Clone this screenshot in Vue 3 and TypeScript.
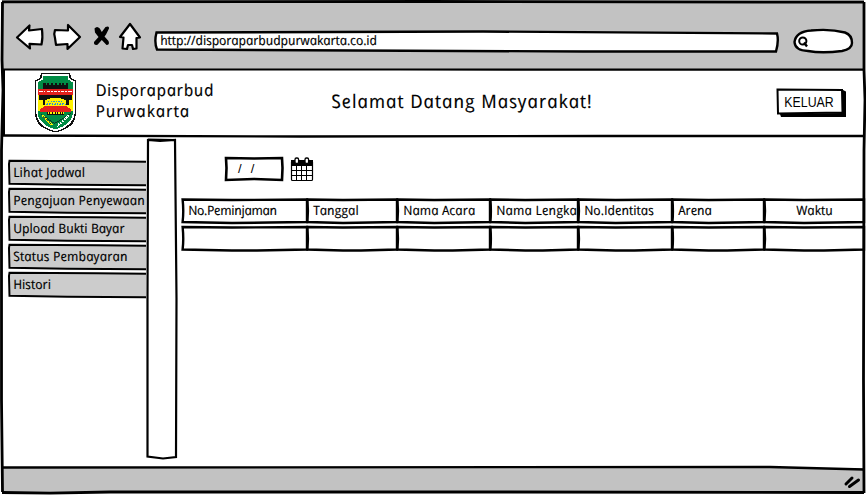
<script setup lang="ts">
interface MenuItem {
  label: string
  tone: string
}

interface Column {
  label: string
  width: number
  tone: string
}

const menu: MenuItem[] = [
  { label: 'Lihat Jadwal', tone: 'm1' },
  { label: 'Pengajuan Penyewaan', tone: 'm2' },
  { label: 'Upload Bukti Bayar', tone: 'm3' },
  { label: 'Status Pembayaran', tone: 'm4' },
  { label: 'Histori', tone: 'm5' },
]

const columns: Column[] = [
  { label: 'No.Peminjaman', width: 125, tone: 'c1' },
  { label: 'Tanggal', width: 90, tone: 'c2' },
  { label: 'Nama Acara', width: 93, tone: 'c3' },
  { label: 'Nama Lengka', width: 88, tone: 'c4' },
  { label: 'No.Identitas', width: 94, tone: 'c5' },
  { label: 'Arena', width: 92, tone: 'c6' },
  { label: 'Waktu', width: 100, tone: 'c7' },
]
</script>

<template>
  <div class="window">
    <header class="chrome">
      <nav class="tools">
        <svg class="nav-icons" width="136" height="40" viewBox="10 16 136 40">
          <g fill="#fff" stroke="#000" stroke-width="2.2" stroke-linejoin="round">
            <path d="M17 37.500 L29.500 25.500 L29 30.500 L42 29 Q43 38 41.500 44.500 L29.500 43.800 L30 48.500 Z" />
            <path d="M80 37 L68 25 L68 30.500 L55 30 Q53.500 34 55 38 L56 44.800 L67.500 44 L67.500 49 Z" />
            <path d="M130 24 L120 37 L123.500 37.500 L122.500 48.500 L127 49 L128 45 L132 45 L133 49 L136.500 48.500 L136.500 38 L140 37.500 Z" />
          </g>
          <path d="M94.500 28.500 Q97 25.500 99.800 28.500 L101.800 32 L105.500 27 Q109.500 25.500 109 28.500 L106 34.500 L104.500 36.500 L108.500 41 Q110 45 106.500 45 L101.800 40 L97.500 44.800 Q93.500 45.500 94 42 L98.500 37 L95 32.500 Z" />
        </svg>
      </nav>
      <div class="address">
        <svg class="sketch" viewBox="0 0 626 24">
          <path d="M3.500 2.500 L330 1.500 L624 3.500 Q626 11 623 21.500 H430 L200 20.500 L4 19.500 Q1 12 3.500 2.500 Z" />
        </svg>
        <span class="hand url">http://disporaparbudpurwakarta.co.id</span>
      </div>
      <div class="search">
        <svg width="62" height="28" viewBox="792 27 62 28" fill="#fff" stroke="#000" stroke-width="2.400">
          <path d="M794.500 42 Q796 31.500 811 30.500 Q830 28.500 845 32.500 Q852 35 852 43 Q852 49 842 51 Q822 53.500 808 51 Q795 50.500 794.500 42 Z" />
          <circle cx="802.800" cy="41" r="3.600" stroke-width="2" />
          <path d="M804 42.500 L807 46.500" stroke-width="2.400" />
        </svg>
      </div>
    </header>

    <section class="banner">
      <svg class="crest" width="41" height="60" viewBox="105 219 124 180" shape-rendering="crispEdges">
        <path fill="#111" d="M123 219 H211 L214 233 L229 241 V340 Q227 366 211 379 Q190 394 167 398 Q143 394 123 379 Q107 366 105 340 V241 L120 233 Z" />
        <path fill="#fff" d="M127 222 H207 L210 236 L225 243 V340 Q222 362 207 374 Q190 390 167 394 Q143 390 126 374 Q111 362 109 340 V243 L124 236 Z" />
        <path fill="#008c45" d="M130 228 H204 L206 239 L220 247 V340 Q217 358 203 370 Q187 384 167 388 Q146 384 130 370 Q115 358 113 340 V247 L128 239 Z" />
        <path fill="#fff200" d="M113 284 H220 V334 H113 Z" />
        <path fill="#101010" d="M130 247 H137 V254 H142 V247 H148 V254 H153 V247 H160 V254 H165 V247 H172 V254 H177 V247 H183 V254 H188 V247 H194 V254 H199 V247 H205 V270 H130 Z" />
        <path fill="#101010" d="M118 285 H216 V300 H208 V315 H198 V300 H136 V315 H128 V300 H118 Z" />
        <path fill="#fff200" d="M142 297 H151 V293 H184 V297 H193 V303 H199 V318 H136 V303 H142 Z" />
        <path stroke="#2b8fd8" stroke-width="3" stroke-dasharray="4 4" d="M144 303 H192 M140 309 H196 M139 315 H198" />
        <path fill="#e3211c" d="M114 268 H219 V284 H114 Z M137 317 H199 L213 328 V336 H119 V329 Z" />
        <path stroke="#fff" stroke-width="3" stroke-dasharray="10 3 5 4" d="M118 275 H216" />
        <path fill="#101010" d="M142 336 H194 V344 H142 Z" />
        <path stroke="#fff200" stroke-width="6" stroke-dasharray="5 3" d="M143 339 H194" />
        <path stroke="#101010" stroke-width="2" d="M122 342 L164 371 M213 341 L166 370" fill="none" />
        <path stroke="#fff200" stroke-width="6" stroke-dasharray="5 1" d="M127 346 L147 368 L158 376" fill="none" />
        <path stroke="#101010" stroke-width="2" stroke-dasharray="3 3" d="M129 350 L157 374" />
        <path stroke="#fff" stroke-width="6" stroke-dasharray="5 3" d="M208 346 L190 364 L171 378" fill="none" />
      </svg>
      <div class="brand">
        <span class="hand b1">Disporaparbud</span>
        <span class="hand b2">Purwakarta</span>
      </div>
      <h1 class="hand title">Selamat Datang Masyarakat!</h1>
      <button class="logout" type="button">
        <svg class="sketch" viewBox="0 0 72 30">
          <path d="M4 26 L5 29 H70 V3.500 L67 2 L66 25 Z" fill="#000" stroke="none" />
          <path d="M1.500 1.500 L66 2 L66.500 24.500 L2 25.500 Z" stroke-width="2" />
        </svg>
        <span>KELUAR</span>
      </button>
    </section>

    <main class="content">
      <aside class="menu">
        <a v-for="item in menu" :key="item.label" class="tab">
          <svg class="sketch tab-sketch" viewBox="0 0 140 28">
            <path d="M140 2.500 L90 2 L1.500 1.500 L1 5 L1.500 25 L60 26 L140 26.500" />
          </svg>
          <span class="hand" :class="item.tone">{{ item.label }}</span>
        </a>
      </aside>
      <div class="divider">
        <svg class="sketch" viewBox="0 0 32 322">
          <path d="M2 2 L14 3 L29 2 L30.500 160 L30 319 L17 320.500 L1.500 318.500 L1.500 160 Z" stroke-width="2.200" />
          <path d="M2 1.500 L29 2" stroke-width="2.200" />
        </svg>
      </div>
      <section class="data">
        <div class="filter">
          <div class="date">
            <svg class="sketch" viewBox="0 0 60 26">
              <path d="M2 2 L30 2.500 L58 2 L58.500 12 L58 24 L30 23 L2 24 L2.500 12 Z" stroke-width="2.600" />
            </svg>
            <span>/ &nbsp;/</span>
          </div>
          <svg class="calendar" width="24" height="26" viewBox="290 156 24 26">
            <rect x="291.500" y="161" width="21" height="19.500" rx="1" fill="#fff" stroke="#000" stroke-width="1.200" />
            <path d="M291 160 H313 V166 H291 Z" />
            <path d="M292 170.500 H312.500 M292 175.500 H312.500 M296.500 166 V180 M301.500 166 V180 M306.500 166 V180" stroke="#000" stroke-width="1" />
            <rect x="295" y="158" width="3.600" height="5.500" rx="1.500" fill="#fff" stroke="#000" stroke-width="1.300" />
            <rect x="305" y="158" width="3.600" height="5.500" rx="1.500" fill="#fff" stroke="#000" stroke-width="1.300" />
          </svg>
        </div>
        <div class="table">
          <div class="row">
            <div v-for="col in columns" :key="col.label" class="cell" :class="{ centered: col.label === 'Waktu' }" :style="{ width: col.width + 'px' }">
              <svg class="sketch" viewBox="0 0 100 28" preserveAspectRatio="none">
                <path d="M.5 2.500 L40 3 L100 2.500 V25 L70 25.500 L40 26 L.5 25 Q1.500 14 .5 2.500 Z" vector-effect="non-scaling-stroke" />
              </svg>
              <span class="clip"><span class="hand" :class="col.tone">{{ col.label }}</span></span>
            </div>
          </div>
          <div class="row">
            <div v-for="col in columns" :key="col.label" class="cell" :style="{ width: col.width + 'px' }">
              <svg class="sketch" viewBox="0 0 100 28" preserveAspectRatio="none">
                <path d="M.5 2 L40 2.500 L100 2 V24.500 L60 25.500 L40 25.500 L.5 24.500 Q1.500 14 .5 2 Z" vector-effect="non-scaling-stroke" />
              </svg>
            </div>
          </div>
        </div>
      </section>
    </main>

    <footer class="status">
      <svg width="18" height="16" viewBox="843 474 18 16" stroke="#000" stroke-width="3" stroke-linecap="round">
        <path d="M846 484 L852 478 M849.500 486.500 L858.500 480" />
      </svg>
    </footer>

    <svg class="frame" viewBox="0 0 866 495">
      <path d="M2 1.800 L430 1.500 L864 2.200" />
      <path d="M2.500 2 L2 60 L3 90 L1.500 150 L1.500 400 L2.500 492" />
      <path d="M864 2 L864 70 L865 100 L864 150 L863.500 380 L864 493" />
      <path d="M2 492.500 L50 493.200 L110 492 L500 492 L864 492.500" />
      <path d="M3 69.500 L400 69.500 L864 69.700" stroke-width="2.200" />
      <path d="M4 69 V136" stroke-width="2" />
      <path d="M3 135.500 L300 136.500 L600 136 L864 136" stroke-width="2.400" />
      <path d="M3 467.500 L770 467 L864 469.500" stroke-width="2.400" />
    </svg>
  </div>
</template>

<style>
body {
  margin: 0;
  background: #fff;
}
</style>

<style scoped>
.window {
  position: relative;
  display: grid;
  grid-template-rows: 70px 66px 331px 25px;
  width: 866px;
  height: 495px;
  overflow: hidden;
  color: #000;
  font-family: "Open Sans", "Noto Sans", sans-serif;
  font-size: 13px;
}
.frame {
  position: absolute;
  inset: 0;
  width: 866px;
  height: 495px;
  fill: none;
  stroke: #000;
  stroke-width: 2.8;
  pointer-events: none;
}
.sketch {
  position: absolute;
  inset: 0;
  width: 100%;
  height: 100%;
  overflow: visible;
  fill: #fff;
  stroke: #000;
  stroke-width: 2.4;
}
/* Italic letterforms set upright give the round, single-storey "a". */
.hand {
  position: relative;
  display: block;
  width: max-content;
  font-style: italic;
  font-weight: 400;
  white-space: nowrap;
  transform: skewX(12deg);
  -webkit-text-stroke: 0.15px #000;
}
.chrome {
  display: flex;
  box-sizing: border-box;
  margin: 0 2px;
  padding-left: 8px;
  background: #c2c2c2;
}
.tools {
  width: 143px;
  padding-top: 16px;
}
.address {
  position: relative;
  width: 626px;
  height: 24px;
  margin-top: 30px;
}
.url {
  margin-left: 7px;
  line-height: 21px;
  letter-spacing: -0.09px;
}
.search {
  margin: 27px 0 0 13px;
}
.banner {
  display: flex;
  align-items: flex-start;
}
.crest {
  margin: 3px 0 0 35px;
}
.brand {
  width: 236px;
  margin: 9px 0 0 19px;
  font-size: 16.5px;
  line-height: 21px;
}
.b1 {
  letter-spacing: 0.6px;
}
.b2 {
  letter-spacing: 0.95px;
}
.title {
  margin: 18px 0 0;
  font-size: 18.5px;
  line-height: 26px;
  letter-spacing: 0.95px;
}
.logout {
  position: relative;
  width: 72px;
  height: 30px;
  margin: 18px 18px 0 auto;
  padding: 0 6px 2px 0;
  border: 0;
  background: none;
  font: 14px/26px "Liberation Sans", sans-serif;
  color: #000;
}
.logout span {
  position: relative;
  display: inline-block;
  transform: scaleX(0.88);
}
.content {
  display: flex;
}
.menu {
  width: 138px;
  padding: 23px 0 0 8px;
}
.tab {
  position: relative;
  display: block;
  height: 28px;
}
.tab-sketch {
  fill: #ccc;
  stroke-width: 2;
}
.tab .hand {
  margin-left: 5px;
  line-height: 27px;
}
.m1 {
  letter-spacing: 0.15px;
}
.m2 {
  letter-spacing: 0.1px;
}
.m4 {
  letter-spacing: 0.12px;
}
.divider {
  position: relative;
  width: 32px;
  height: 322px;
  margin-top: 2px;
}
.data {
  padding: 20px 0 0 4px;
}
.filter {
  display: flex;
  gap: 6px;
  margin-left: 42px;
}
.date {
  position: relative;
  width: 60px;
  height: 26px;
  font: 13px/26px "Liberation Sans", sans-serif;
}
.date span {
  position: relative;
  margin-left: 14px;
  word-spacing: 1px;
}
.table {
  margin-top: 15px;
}
.row {
  display: flex;
  height: 28px;
}
.cell {
  position: relative;
  flex: none;
  box-sizing: border-box;
}
.clip {
  position: relative;
  display: block;
  overflow: hidden;
  padding-left: 6px;
  line-height: 27px;
}
.c1 {
  letter-spacing: -0.3px;
}
.c3 {
  letter-spacing: 0.05px;
}
.c4 {
  letter-spacing: 0.15px;
}
.centered .clip {
  display: flex;
  justify-content: center;
  padding: 0;
}
.status {
  display: flex;
  justify-content: flex-end;
  align-items: flex-start;
  box-sizing: border-box;
  margin: 0 2px;
  padding: 7px 3px 0 0;
  background: linear-gradient(#c2c2c2, #c2c2c2) no-repeat 0 1px;
}
</style>
